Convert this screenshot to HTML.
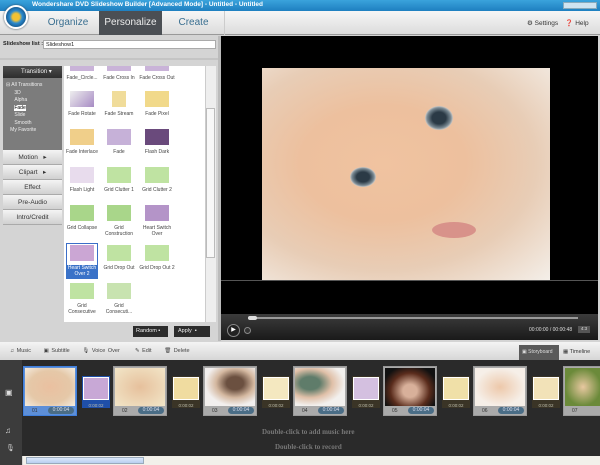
<!DOCTYPE html>
<html><head><style>
*{margin:0;padding:0;box-sizing:border-box}
body{width:600px;height:465px;position:relative;overflow:hidden;background:#d4d4d4;font-family:"Liberation Sans",sans-serif;font-size:6px;color:#222}
.a{position:absolute}
.btn{position:absolute;left:3px;width:59px;height:15px;background:linear-gradient(#f4f4f4,#d0d0d0);border-bottom:1px solid #aaa;font-size:6.5px;text-align:center;line-height:15px;color:#333}
.it{position:absolute;width:36px;text-align:center;font-size:5px;color:#444;line-height:6px}
.it i{display:block;margin:0 auto 4px;width:24px;height:16px}
.sl{position:absolute;top:366px;width:54px;height:50px;background:#aaa;border:1px solid #999}
.sl b{position:absolute;left:1px;top:1px;right:1px;height:38px}
.sl span{position:absolute;bottom:1px;right:2px;width:26px;height:7px;border-radius:4px;background:#4a6d86;color:#dde;font-size:5px;line-height:7px;text-align:center}
.sl em{position:absolute;bottom:1px;left:8px;font-style:normal;font-size:5px;color:#333}
.tr{position:absolute;top:376px;width:28px;height:32px;background:#3a3426}
.tr b{position:absolute;left:1px;top:1px;right:1px;height:23px;border:1px solid #fff}
.tr span{position:absolute;bottom:0;left:0;right:0;font-size:4.5px;color:#bba;text-align:center}
</style></head><body>
<div class="a" style="left:0;top:0;width:600px;height:11px;background:linear-gradient(#3aa3dc,#1e7fc0)"></div>
<div class="a" style="left:32px;top:1px;font-size:6.5px;font-weight:bold;color:#fff">Wondershare DVD Slideshow Builder [Advanced Mode] - Untitled - Untitled</div>
<div class="a" style="left:563px;top:2px;width:34px;height:7px;background:#cfe3f0;border:1px solid #8ab"></div>
<div class="a" style="left:0;top:11px;width:600px;height:24px;background:linear-gradient(#f6f6f6,#dcdcdc);border-bottom:1px solid #999"></div>
<div class="a" style="left:4px;top:5px;width:24px;height:24px;border-radius:50%;background:radial-gradient(#f2c234 25%,#2a8ad0 45%,#1a5f95 70%);border:2px solid #fff;box-shadow:0 0 2px #345"></div>
<div class="a" style="left:38px;top:11px;width:60px;height:24px;font-size:10px;color:#3a6f90;line-height:24px;text-align:center">Organize</div>
<div class="a" style="left:99px;top:11px;width:63px;height:24px;background:#4b4f54;font-size:10px;color:#eee;line-height:24px;text-align:center">Personalize</div>
<div class="a" style="left:163px;top:11px;width:62px;height:24px;font-size:10px;color:#3a6f90;line-height:24px;text-align:center;border-right:1px solid #ccc">Create</div>
<div class="a" style="left:527px;top:19px;font-size:6.5px;color:#333">⚙ Settings &nbsp;&nbsp; ❓ Help</div>
<div class="a" style="left:3px;top:41px;font-size:5.5px;font-weight:bold">Slideshow list :</div>
<div class="a" style="left:43px;top:40px;width:173px;height:9px;background:#fff;border:1px solid #aaa;font-size:5.5px;padding-left:2px;line-height:8px">Slideshow1</div>
<div class="a" style="left:0;top:58px;width:220px;height:2px;background:#c4c4c4"></div>
<div class="a" style="left:3px;top:66px;width:59px;height:84px;background:#7c7c7c"></div>
<div class="a" style="left:3px;top:66px;width:59px;height:12px;background:linear-gradient(#4d4d4d,#2e2e2e);color:#eee;font-size:6px;line-height:12px;padding-left:18px">Transition ▾</div>
<div class="a" style="left:6px;top:82px;color:#eee;font-size:5px;line-height:7.5px">⊟ All Transitions<br>&nbsp;&nbsp;&nbsp;&nbsp;&nbsp;&nbsp;3D<br>&nbsp;&nbsp;&nbsp;&nbsp;&nbsp;&nbsp;Alpha<br>&nbsp;&nbsp;&nbsp;&nbsp;&nbsp;&nbsp;<span style="background:#fff;color:#000">Fade</span><br>&nbsp;&nbsp;&nbsp;&nbsp;&nbsp;&nbsp;Slide<br>&nbsp;&nbsp;&nbsp;&nbsp;&nbsp;&nbsp;Smooth<br>&nbsp;&nbsp;&nbsp;My Favorite</div>
<div class="btn" style="top:150px">Motion &nbsp;&nbsp;▸</div>
<div class="btn" style="top:165px">Clipart &nbsp;&nbsp;▸</div>
<div class="btn" style="top:180px">Effect</div>
<div class="btn" style="top:195px">Pre-Audio</div>
<div class="btn" style="top:210px">Intro/Credit</div>
<div class="a" style="left:64px;top:66px;width:141px;height:256px;background:#fff"></div>
<div class="a" style="left:205px;top:66px;width:11px;height:256px;background:#eee;border-left:1px solid #ccc"></div>
<div class="a" style="left:206px;top:108px;width:9px;height:150px;background:#f8f8f8;border:1px solid #bbb"></div>
<div class="it" style="left:64px;top:66px"><i style="height:5px;background:#c9b3d8"></i>Fade_Circle...</div>
<div class="it" style="left:101px;top:66px"><i style="height:5px;background:#c9b3d8"></i>Fade Cross In</div>
<div class="it" style="left:139px;top:66px"><i style="height:5px;background:#c9b3d8"></i>Fade Cross Out</div>
<div class="it" style="left:64px;top:91px"><i style="background:linear-gradient(135deg,#eee,#a78bc4)"></i>Fade Rotate</div>
<div class="it" style="left:101px;top:91px"><i style="width:14px;background:#f0dc9a"></i>Fade Stream</div>
<div class="it" style="left:139px;top:91px"><i style="background:#f1d98a"></i>Fade Pixel</div>
<div class="it" style="left:64px;top:129px"><i style="background:#f0cf8a"></i>Fade Interlace</div>
<div class="it" style="left:101px;top:129px"><i style="background:#c6b1d8"></i>Fade</div>
<div class="it" style="left:139px;top:129px"><i style="background:#6a4a7c"></i>Flash Dark</div>
<div class="it" style="left:64px;top:167px"><i style="background:#e8dced"></i>Flash Light</div>
<div class="it" style="left:101px;top:167px"><i style="background:#bfe3a2"></i>Grid Clutter 1</div>
<div class="it" style="left:139px;top:167px"><i style="background:#bfe3a2"></i>Grid Clutter 2</div>
<div class="it" style="left:64px;top:205px"><i style="background:#a9d68a"></i>Grid Collapse</div>
<div class="it" style="left:101px;top:205px"><i style="background:#a9d68a"></i>Grid Construction</div>
<div class="it" style="left:139px;top:205px"><i style="background:#b494c8"></i>Heart Switch Over</div>
<div class="a" style="left:66px;top:243px;width:32px;height:36px;border:1px solid #3b6ec8"></div>
<div class="a" style="left:66px;top:265px;width:32px;height:14px;background:#3a72c8"></div>
<div class="it" style="left:64px;top:245px;color:#fff"><i style="background:#cba6d4"></i>Heart Switch Over 2</div>
<div class="it" style="left:101px;top:245px"><i style="background:#bfe3a2"></i>Grid Drop Out</div>
<div class="it" style="left:139px;top:245px"><i style="background:#bfe3a2"></i>Grid Drop Out 2</div>
<div class="it" style="left:64px;top:283px"><i style="background:#bfe3a2"></i>Grid Consecutive</div>
<div class="it" style="left:101px;top:283px"><i style="background:#c8e3b0"></i>Grid Consecuti...</div>
<div class="a" style="left:133px;top:326px;width:35px;height:11px;background:#2c2c2c;color:#eee;font-size:5.5px;line-height:11px;padding-left:3px">Random ▪</div>
<div class="a" style="left:174px;top:326px;width:36px;height:11px;background:#2c2c2c;color:#eee;font-size:5.5px;line-height:11px;padding-left:4px">Apply &nbsp;▪</div>
<div class="a" style="left:218px;top:36px;width:3px;height:305px;background:#bbb"></div>
<div class="a" style="left:221px;top:36px;width:377px;height:278px;background:#000"></div>
<div class="a" style="left:262px;top:68px;width:288px;height:212px;background:radial-gradient(ellipse at 42% 45%,#f0c3a0 0%,#edc09e 35%,#e8cdb6 65%,#f4efe9 100%)"></div>
<div class="a" style="left:350px;top:167px;width:26px;height:20px;border-radius:50%;background:radial-gradient(#2b3a46 35%,#7a8a94 60%,#f3e4d8 75%)"></div>
<div class="a" style="left:425px;top:106px;width:28px;height:24px;border-radius:50%;background:radial-gradient(#2b3a46 35%,#7a8a94 60%,#f3e4d8 75%)"></div>
<div class="a" style="left:432px;top:222px;width:44px;height:16px;border-radius:50%;background:#d8928a"></div>
<div class="a" style="left:221px;top:280px;width:377px;height:1px;background:#555"></div>
<div class="a" style="left:221px;top:314px;width:377px;height:26px;background:linear-gradient(#3c3c3c,#1a1a1a)"></div>
<div class="a" style="left:248px;top:317px;width:330px;height:2px;background:#999"></div>
<div class="a" style="left:248px;top:316px;width:9px;height:4px;background:#ddd;border-radius:2px"></div>
<div class="a" style="left:227px;top:324px;width:13px;height:13px;border-radius:50%;background:#222;border:1px solid #888;color:#fff;font-size:6px;text-align:center;line-height:11px">▶</div>
<div class="a" style="left:244px;top:327px;width:7px;height:7px;border-radius:50%;background:#333;border:1px solid #888"></div>
<div class="a" style="left:529px;top:327px;color:#ddd;font-size:5px">00:00:00 / 00:00:48</div>
<div class="a" style="left:578px;top:326px;width:12px;height:7px;background:#555;color:#ddd;font-size:4.5px;text-align:center">4:3</div>
<div class="a" style="left:0;top:342px;width:600px;height:18px;background:linear-gradient(#f4f4f4,#d6d6d6)"></div>
<div class="a" style="left:10px;top:348px;font-size:5.5px;color:#444;word-spacing:1px">♫ Music &nbsp;&nbsp;&nbsp;&nbsp;▣ Subtitle &nbsp;&nbsp;&nbsp;&nbsp;🎙 Voice Over &nbsp;&nbsp;&nbsp;&nbsp;&nbsp;✎ Edit &nbsp;&nbsp;&nbsp;&nbsp;🗑 Delete</div>
<div class="a" style="left:519px;top:345px;width:40px;height:15px;background:#5a5a5a;color:#ddd;font-size:5px;line-height:15px;padding-left:3px">▣ Storyboard</div>
<div class="a" style="left:563px;top:349px;font-size:5.5px;color:#333">▦ Timeline</div>
<div class="a" style="left:0;top:360px;width:600px;height:96px;background:#2a2a2a"></div>
<div class="a" style="left:0;top:360px;width:22px;height:105px;background:#3c3c3c"></div>
<div class="a" style="left:5px;top:388px;color:#ddd;font-size:8px">▣</div>
<div class="a" style="left:5px;top:426px;color:#ddd;font-size:8px">♫</div>
<div class="a" style="left:6px;top:444px;color:#ccc;font-size:7px">🎙</div>
<div class="sl" style="left:23px;background:#5d8fd8;border:1px solid #3f7fdd"><b style="background:radial-gradient(#eac0a0,#e5c8a8 60%,#f4ecdf)"></b><em>01</em><span>0:00:04</span></div>
<div class="tr" style="left:82px;background:#1f4fa8"><b style="background:#c8a8d6"></b><span>0:00:02</span></div>
<div class="sl" style="left:113px"><b style="background:radial-gradient(#e6c09c,#f2e6c8)"></b><em>02</em><span>0:00:04</span></div>
<div class="tr" style="left:172px"><b style="background:#f0dca0"></b><span>0:00:02</span></div>
<div class="sl" style="left:203px"><b style="background:radial-gradient(ellipse at 60% 40%,#6b5040 20%,#d4b8a0 45%,#f2efee 70%)"></b><em>03</em><span>0:00:04</span></div>
<div class="tr" style="left:262px"><b style="background:#f4e8c0"></b><span>0:00:02</span></div>
<div class="sl" style="left:293px"><b style="background:radial-gradient(ellipse at 30% 40%,#5f7c6a 20%,#e0c0a8 45%,#f2f0ee 70%)"></b><em>04</em><span>0:00:04</span></div>
<div class="tr" style="left:352px"><b style="background:#d4c0e0"></b><span>0:00:02</span></div>
<div class="sl" style="left:383px"><b style="background:radial-gradient(ellipse at 50% 60%,#d8b09a 20%,#5a2c1c 55%,#111 80%)"></b><em>05</em><span>0:00:04</span></div>
<div class="tr" style="left:442px"><b style="background:#f0e0a8"></b><span>0:00:02</span></div>
<div class="sl" style="left:473px"><b style="background:radial-gradient(#edc8aa,#f6efe8 70%)"></b><em>06</em><span>0:00:04</span></div>
<div class="tr" style="left:532px"><b style="background:#f2e2b8"></b><span>0:00:02</span></div>
<div class="sl" style="left:563px;width:40px"><b style="background:radial-gradient(#e8c8a0,#6b8a3a 70%)"></b><em>07</em></div>
<div class="a" style="left:262px;top:428px;font-family:'Liberation Serif',serif;font-weight:bold;font-size:7px;color:#777">Double-click to add music here</div>
<div class="a" style="left:275px;top:443px;font-family:'Liberation Serif',serif;font-weight:bold;font-size:7px;color:#777">Double-click to record</div>
<div class="a" style="left:23px;top:456px;width:577px;height:9px;background:#f2f0ea"></div>
<div class="a" style="left:26px;top:457px;width:118px;height:7px;background:linear-gradient(#dbe8fa,#b8cff0);border:1px solid #9ab"></div>
</body></html>
